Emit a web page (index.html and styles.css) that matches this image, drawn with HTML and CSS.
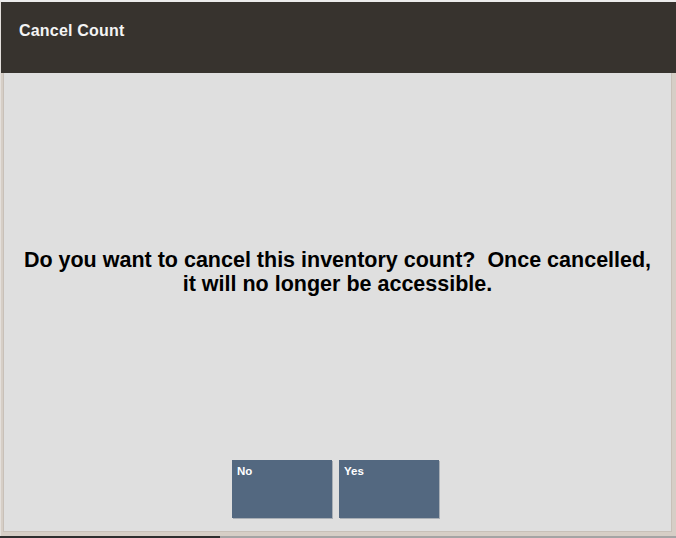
FILE: index.html
```html
<!DOCTYPE html>
<html lang="en">
<head>
  <meta charset="UTF-8" />
  <title>Cancel Count</title>
  <link rel="stylesheet" href="styles.css">
</head>
<body>
  <div class="screen">
    <header class="title-bar">
      <h1>Cancel Count</h1>
    </header>

    <main class="content">
      <p class="prompt">Do you want to cancel this inventory count?&nbsp; Once cancelled,<br>it will no longer be accessible.</p>

      <div class="actions">
        <button class="action">No</button>
        <button class="action">Yes</button>
      </div>
    </main>
  </div>

  <!-- task bar strip along the bottom -->
  <div class="taskbar">
    <span class="taskbar-left"></span>
    <span class="taskbar-right"></span>
  </div>
</body>
</html>
```

FILE: styles.css
```css
html, body {
  margin: 0;
  padding: 0;
}
body {
  width: 676px;
  height: 538px;
  background: #dfdfdf;
  font-family: "Liberation Sans", Arial, sans-serif;
  display: flex;
  flex-direction: column;
  overflow: hidden;
}

.screen {
  flex: 1;
  display: flex;
  flex-direction: column;
  border-top: 2px solid #ececec;
  border-left: 1px solid #e4e0dc;
}

.title-bar {
  height: 71px;
  background: #37332e;
  display: flex;
  align-items: center;
  padding-left: 18px;
}
.title-bar h1 {
  margin: 0 0 14px 0;
  font-size: 16px;
  font-weight: bold;
  color: #f4f4f4;
  letter-spacing: 0.2px;
}

.content {
  flex: 1;
  display: flex;
  flex-direction: column;
  align-items: center;
  border-left: 2px solid #d6cec6;
  border-right: 4px solid #d6cec6;
  border-bottom: 4px solid #d6cec6;
  box-shadow: inset 1px 0 0 #c8c0b8, inset -1px -1px 0 #c8c0b8;
}

.prompt {
  margin: 175px 0 0 0;
  text-align: center;
  font-size: 21.5px;
  line-height: 24px;
  font-weight: bold;
  color: #000;
}

.actions {
  margin-top: 164px;
  display: flex;
  gap: 7px;
  padding-right: 4px;
}
.action {
  width: 100px;
  height: 58px;
  padding: 5px 5px;
  border: none;
  background: #536880;
  color: #fff;
  font-family: inherit;
  font-size: 11.5px;
  font-weight: bold;
  text-align: left;
  display: flex;
  align-items: flex-start;
  box-shadow: 1px 1px 0 #a9afb6;
}

.taskbar {
  height: 2px;
  display: flex;
}
.taskbar-left {
  width: 220px;
  background: #2e2e2e;
}
.taskbar-right {
  flex: 1;
  background: #a4a4a4;
}
```
